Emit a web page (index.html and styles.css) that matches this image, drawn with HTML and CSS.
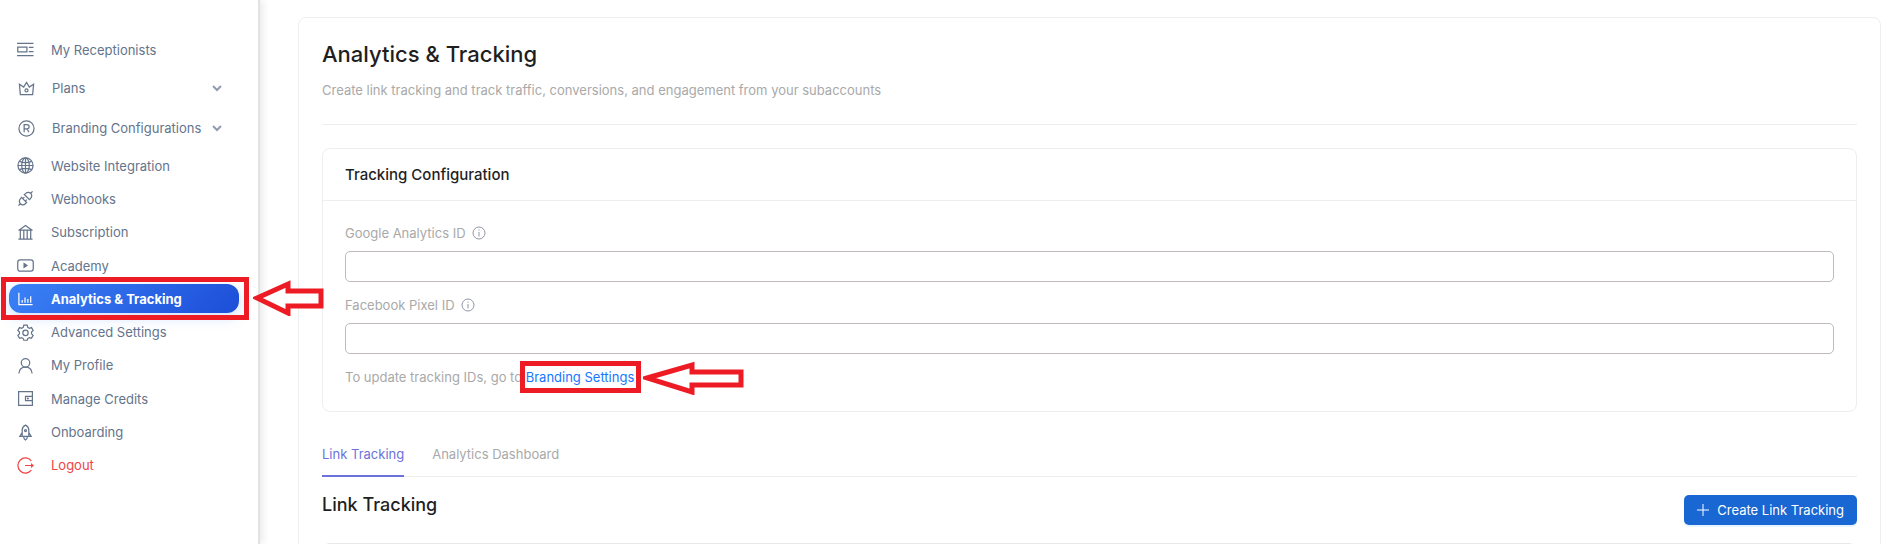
FILE: index.html
```html
<!DOCTYPE html>
<html lang="en">
<head>
  <meta charset="UTF-8">
  <meta name="viewport" content="width=device-width, initial-scale=1.0">
  <title>Analytics &amp; Tracking</title>
  <link rel="stylesheet" href="styles.css">
</head>
<body>

<div class="layout">
  <nav class="sidebar">
    <a href="#" class="nav-item">
      <svg class="icon" viewBox="0 0 18 18"><path d="M0 2.5h17.500M0 15.500h17.500M0.800 6.500h9.700v5H0.800zM12.500 6.700h5M12.500 11.300h5"/></svg>
      My Receptionists
    </a>

    <button class="nav-group">
      <svg class="icon" viewBox="0 0 18 18"><path d="M2.500 15.500 1.500 4.500l4.500 3 3-5 3 5 4.500-3-1 11z"/><circle cx="9" cy="11" r="1.600"/></svg>
      <span>Plans</span>
      <svg class="chevron" viewBox="0 0 10 10"><path d="M1 3l4 4 4-4"/></svg>
    </button>
    <button class="nav-group">
      <svg class="icon" viewBox="0 0 18 18"><circle cx="9" cy="9" r="8"/><path d="M6.500 13V5h3a2.200 2.200 0 0 1 0 4.500h-3M9.500 9.500l2.200 3.500"/></svg>
      <span>Branding Configurations</span>
      <svg class="chevron" viewBox="0 0 10 10"><path d="M1 3l4 4 4-4"/></svg>
    </button>

    <ul class="nav-list">
      <li><a href="#" class="nav-item">
        <svg class="icon" viewBox="0 0 18 18"><circle cx="9" cy="9" r="8"/><ellipse cx="9" cy="9" rx="4" ry="8"/><path d="M9 1v16M1 9h16M2.500 4.700c4 1.600 9 1.600 13 0M2.500 13.300c4-1.600 9-1.600 13 0"/></svg>
        Website Integration
      </a></li>
      <li><a href="#" class="nav-item">
        <svg class="icon" viewBox="0 0 18 18"><path d="M1.500 16.500l2-2M16.500 1.500l-2 2M4.800 7.800l5.400 5.400-1.400 1.400a3.600 3.600 0 0 1-5.200 0 3.600 3.600 0 0 1 0-5.200zM7.800 4.800l5.400 5.400 1.300-1.400a3.600 3.600 0 0 0 0-5.200 3.600 3.600 0 0 0-5.200 0zM6.200 9.200l1.600-1.600M8.800 11.800l1.600-1.600"/></svg>
        Webhooks
      </a></li>
      <li><a href="#" class="nav-item">
        <svg class="icon" viewBox="0 0 18 18"><path d="M1.500 16h15M1.500 6.500h15M2 6.500 9 1.700l7 4.800M3.500 6.500V16M7.200 6.500V16M10.800 6.500V16M14.500 6.500V16"/></svg>
        Subscription
      </a></li>
      <li><a href="#" class="nav-item">
        <svg class="icon" viewBox="0 0 18 18"><rect x="0.800" y="3" width="16.400" height="12" rx="2.500"/><path class="solid" d="M7.500 7 10.500 9 7.500 11z"/></svg>
        Academy
      </a></li>
      <li class="marked"><a href="#" class="nav-item active">
        <svg class="icon" viewBox="0 0 18 18"><path d="M2 3v12.500h14.500M5.500 13.500v-3M8.500 13.500V8M11.500 13.500V9.500M14.500 13.500v-7"/></svg>
        Analytics &amp; Tracking
      </a>
        <svg class="arrow nav-arrow" viewBox="0 0 72 36"><path d="M4 18 35 4v7h33v15H35v7z"/></svg>
      </li>
      <li><a href="#" class="nav-item">
        <svg class="icon" viewBox="0 0 18 18"><path d="M7.200 1.300h3.600l.6 2.300 1.600.9 2.300-.7 1.800 3.100L15.400 8.600v1.800l1.700 1.700-1.800 3.100-2.300-.7-1.600.9-.6 1.800H7.200l-.6-1.800-1.600-.9-2.300.7-1.800-3.100 1.700-1.700V8.600L.9 6.900l1.800-3.100 2.300.7 1.600-.9z"/><circle cx="9" cy="9.400" r="2.800"/></svg>
        Advanced Settings
      </a></li>
      <li><a href="#" class="nav-item">
        <svg class="icon" viewBox="0 0 18 18"><circle cx="9" cy="6.200" r="4.500"/><path d="M2 17.500c.3-4 2.800-6.800 7-6.800s6.700 2.800 7 6.800"/></svg>
        My Profile
      </a></li>
      <li><a href="#" class="nav-item">
        <svg class="icon" viewBox="0 0 18 18"><path d="M1.700 1.700h14.600v14.600H1.700zM16.300 6.700H9v4.600h7.300"/><circle class="solid" cx="11.500" cy="9" r="0.500"/></svg>
        Manage Credits
      </a></li>
      <li><a href="#" class="nav-item">
        <svg class="icon" viewBox="0 0 18 18"><path d="M5.500 13V6.500C5.500 4 7 2.200 9 1.200c2 1 3.500 2.800 3.500 5.300V13zM5.500 9 3 13h2.500M12.500 9l2.500 4h-2.500M7 13c0 2 .8 3.200 2 4 1.200-.8 2-2 2-4"/><circle cx="9" cy="7" r="1"/></svg>
        Onboarding
      </a></li>
      <li><a href="#" class="nav-item logout">
        <svg class="icon" viewBox="0 0 18 18"><path d="M15.200 4A8 8 0 1 0 15.200 14M8.500 9h8"/><path class="solid" d="M15.500 7.800 17 9 15.500 10.200z"/></svg>
        Logout
      </a></li>
    </ul>
  </nav>

  <main class="content">
    <div class="page-card">
      <header class="page-header">
        <h1>Analytics &amp; Tracking</h1>
        <p>Create link tracking and track traffic, conversions, and engagement from your subaccounts</p>
      </header>

      <section class="config-card">
        <h2>Tracking Configuration</h2>
        <div class="config-body">
          <div class="field">
            <label for="gaId">Google Analytics ID
              <svg class="info" viewBox="0 0 14 14"><circle cx="7" cy="7" r="6"/><path d="M7 6v4.500M7 3.500v1.200"/></svg>
            </label>
            <input type="text" id="gaId">
          </div>
          <div class="field">
            <label for="pixelId">Facebook Pixel ID
              <svg class="info" viewBox="0 0 14 14"><circle cx="7" cy="7" r="6"/><path d="M7 6v4.500M7 3.500v1.200"/></svg>
            </label>
            <input type="text" id="pixelId">
          </div>
          <p class="hint">To update tracking IDs, go to <a href="#">Branding Settings</a>
            <svg class="arrow hint-arrow" viewBox="0 0 102 34"><path d="M4 17 49 4v7h49v13H49v7z"/></svg>
          </p>
        </div>
      </section>

      <div class="tabs">
        <button class="tab selected">Link Tracking</button>
        <button class="tab">Analytics Dashboard</button>
      </div>

      <div class="section-head">
        <h3>Link Tracking</h3>
        <button class="btn">
          <svg viewBox="0 0 12 12"><path d="M6 0v12M0 6h12"/></svg>
          Create Link Tracking
        </button>
      </div>

      <div class="table-box"></div>
    </div>
  </main>
</div>

</body>
</html>
```
FILE: styles.css
```css
*, *::before {
  box-sizing: border-box;
}
body {
  margin: 0;
  font-family: Inter, "Liberation Sans", sans-serif;
  font-size: 13px;
  line-height: 20px;
  color: #1f1f1f;
  background: #fff;
}
h1, h2, h3, p, ul {
  margin: 0;
  padding: 0;
}
button {
  font: inherit;
  border: none;
  background: none;
  cursor: pointer;
}
a {
  text-decoration: none;
}
.layout {
  display: flex;
  height: 100vh;
  overflow: hidden;
}

/* sidebar */
.sidebar {
  flex: none;
  width: 260px;
  padding-top: 35px;
  border-right: 2px solid #e2e2e2;
  box-shadow: 2px 0 8px rgba(0, 0, 0, 0.1);
}
.nav-item, .nav-group {
  display: flex;
  align-items: center;
  gap: 17px;
  color: #64748b;
}
.nav-item {
  height: 29px;
  margin: 0 19px 0 9px;
  padding-left: 8px;
  border-radius: 12px;
}
.nav-group {
  width: 100%;
  height: 40px;
  padding: 0 36px 0 18px;
  text-align: left;
}
.nav-item + .nav-group {
  margin-top: 4px;
}
.nav-group span {
  flex: 1;
  white-space: nowrap;
}
.icon {
  flex: none;
  width: 17px;
  height: 17px;
  fill: none;
  stroke: currentColor;
  stroke-width: 1.3;
}
.icon .solid {
  fill: currentColor;
}
.chevron {
  flex: none;
  width: 10px;
  height: 10px;
  margin-left: -17px;
  fill: none;
  stroke: #8e9bb0;
  stroke-width: 2;
}
.nav-list {
  display: grid;
  grid-auto-rows: 1fr;
  align-items: center;
  height: 333px;
  margin-top: 1px;
  list-style: none;
}
.nav-item.active {
  color: #fff;
  font-weight: 700;
  background: linear-gradient(135deg, #3b82f6, #1d4ed8);
  box-shadow: 0 4px 14px rgba(59, 130, 246, 0.25);
}
.nav-item.logout {
  color: #ef4444;
}

/* red callouts */
.marked, .hint {
  position: relative;
}
.marked::before, .hint::before {
  content: "";
  position: absolute;
  border: 5px solid #ed1c24;
}
.marked::before {
  inset: -7px 9px -7px 1px;
}
.hint::before {
  top: -6px;
  left: 175px;
  width: 121px;
  height: 32px;
}
.arrow {
  position: absolute;
  fill: #fff;
  stroke: #ed1c24;
  stroke-width: 5;
}
.nav-arrow {
  top: -4px;
  left: 253px;
  width: 72px;
  height: 36px;
}
.hint-arrow {
  top: -6px;
  left: 298px;
  width: 102px;
  height: 34px;
}

/* content */
.content {
  flex: 1;
  padding: 17px 16px 0 38px;
}
.page-card {
  padding: 23px;
  border: 1px solid #eee;
  border-radius: 8px;
}
.page-header {
  padding-bottom: 23px;
  border-bottom: 1px solid #eee;
}
h1 {
  font-size: 22px;
  font-weight: 500;
  line-height: 26px;
}
.page-header p {
  margin-top: 12px;
  line-height: 22px;
  color: #a9a9a9;
}
.config-card {
  margin-top: 23px;
  border: 1px solid #eee;
  border-radius: 8px;
}
h2 {
  padding: 0 22px;
  border-bottom: 1px solid #eee;
  font-size: 15px;
  font-weight: 500;
  line-height: 51px;
}
.config-body {
  display: flex;
  flex-direction: column;
  gap: 13px;
  padding: 22px 22px 24px;
  color: #a9a9a9;
}
.field label {
  display: flex;
  align-items: center;
  gap: 6px;
}
.info {
  width: 14px;
  height: 14px;
  fill: none;
  stroke: #9297a6;
}
.field input {
  display: block;
  width: 100%;
  height: 31px;
  margin-top: 8px;
  padding: 0 10px;
  border: 1px solid #c0b9bd;
  border-radius: 5px;
  font: inherit;
}
.hint a {
  color: #1677ff;
}
.tabs {
  display: flex;
  gap: 28px;
  margin-top: 31px;
  border-bottom: 1px solid #eee;
}
.tab {
  margin-bottom: -1px;
  padding: 0 0 10px;
  border-bottom: 2px solid transparent;
  line-height: 22px;
  color: #a9a9a9;
}
.tab.selected {
  color: #6c72d9;
  border-bottom-color: #6c72d9;
}
.section-head {
  display: flex;
  justify-content: space-between;
  align-items: flex-start;
  margin-top: 18px;
}
h3 {
  font-size: 18px;
  font-weight: 500;
  line-height: 20px;
}
.btn {
  display: flex;
  align-items: center;
  gap: 8px;
  height: 30px;
  padding: 0 13px;
  border-radius: 5px;
  color: #fff;
  background: #1967d2;
  box-shadow: 0 2px 0 rgba(5, 145, 255, 0.1);
}
.btn svg {
  width: 12px;
  height: 12px;
  stroke: #fff;
}
.table-box {
  height: 60px;
  margin-top: 18px;
  border: 1px solid #e8e8e8;
  border-radius: 8px;
}
```
